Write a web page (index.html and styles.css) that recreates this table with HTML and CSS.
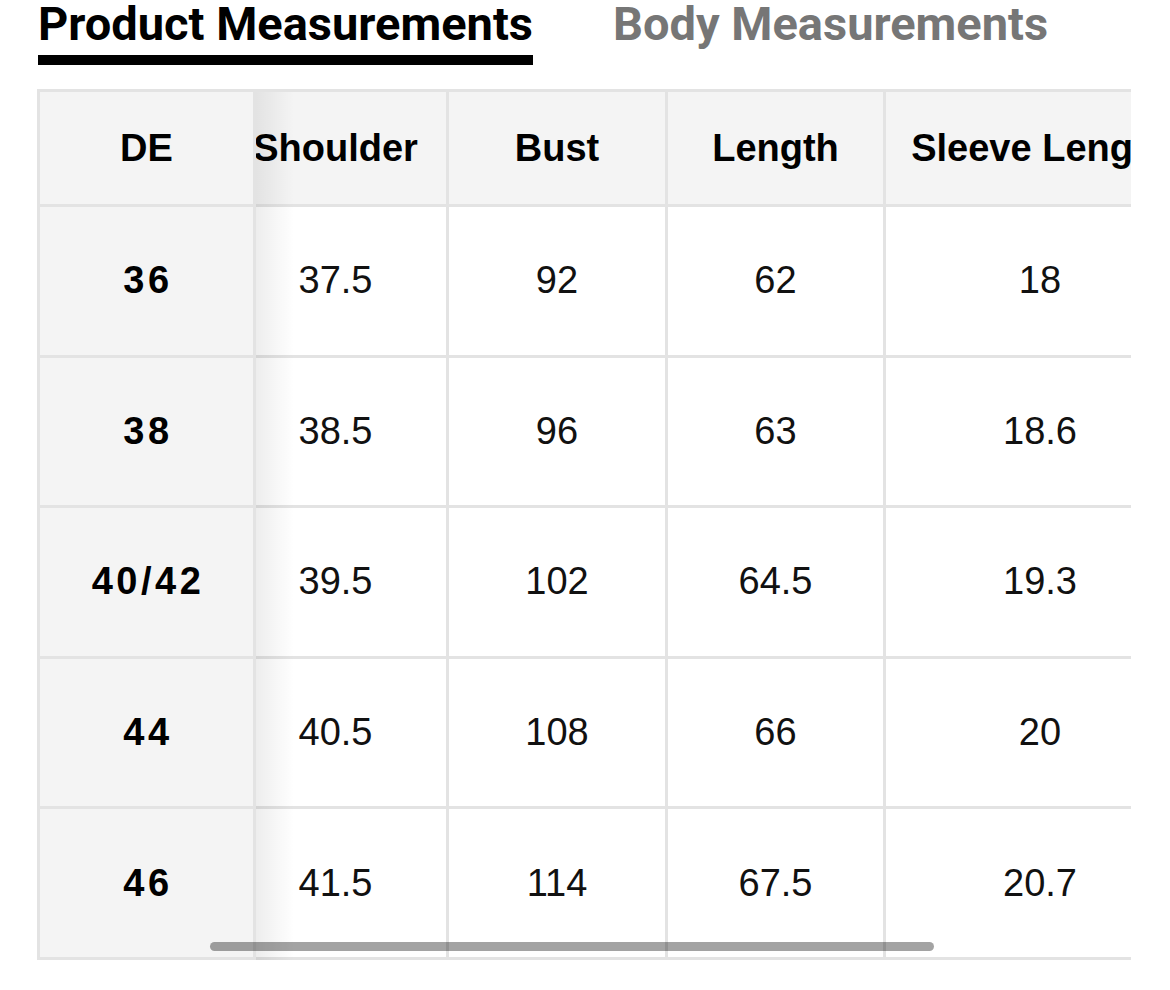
FILE: index.html
```html
<!DOCTYPE html>
<html lang="en">
<head>
<meta charset="utf-8">
<title>Size Guide</title>
<link rel="stylesheet" href="styles.css">
</head>
<body>
<div class="tabs">
  <div class="tab active">Product Measurements</div>
  <div class="tab">Body Measurements</div>
</div>
<div class="table-wrap">
  <div class="fixed-col">
    <div class="cell head">DE</div>
    <div class="cell size">36</div>
    <div class="cell size">38</div>
    <div class="cell size">40/42</div>
    <div class="cell size">44</div>
    <div class="cell size">46</div>
  </div>
  <div class="scroll-area">
    <div class="grid">
      <div class="cell head">Shoulder</div>
      <div class="cell head">Bust</div>
      <div class="cell head">Length</div>
      <div class="cell head">Sleeve Length</div>

      <div class="cell">37.5</div>
      <div class="cell">92</div>
      <div class="cell">62</div>
      <div class="cell">18</div>

      <div class="cell">38.5</div>
      <div class="cell">96</div>
      <div class="cell">63</div>
      <div class="cell">18.6</div>

      <div class="cell">39.5</div>
      <div class="cell">102</div>
      <div class="cell">64.5</div>
      <div class="cell">19.3</div>

      <div class="cell">40.5</div>
      <div class="cell">108</div>
      <div class="cell">66</div>
      <div class="cell">20</div>

      <div class="cell">41.5</div>
      <div class="cell">114</div>
      <div class="cell">67.5</div>
      <div class="cell">20.7</div>
    </div>
  </div>
  <div class="scrollbar"></div>
</div>
</body>
</html>
```

FILE: styles.css
```css
* { box-sizing: border-box; }

body {
  margin: 0;
  background: #ffffff;
  font-family: "Liberation Sans", Arial, sans-serif;
  color: #000;
}

.tabs {
  display: flex;
  gap: 80px;
  padding-left: 38px;
  padding-top: 1px;
  margin-bottom: 24px;
}

.tab {
  font-family: Roboto, "Liberation Sans", sans-serif;
  font-weight: 700;
  font-size: 47px;
  line-height: 46px;
  color: #767676;
  padding-bottom: 8px;
  border-bottom: 10px solid transparent;
  white-space: nowrap;
}

.tab.active {
  color: #000;
  border-bottom-color: #000;
}

.table-wrap {
  position: relative;
  display: flex;
  margin-left: 37px;
  width: 1094px;
  border-top: 3px solid #e3e3e3;
  border-left: 3px solid #e3e3e3;
}

.cell {
  display: flex;
  align-items: center;
  justify-content: center;
  height: 150.6px;
  border-right: 3px solid #e3e3e3;
  border-bottom: 3px solid #e3e3e3;
  font-size: 38px;
  color: #111;
  white-space: nowrap;
  background: #fff;
}

.cell.head {
  height: 115px;
  font-weight: 700;
  color: #000;
  background: #f4f4f4;
}

.fixed-col {
  position: relative;
  z-index: 2;
  flex: 0 0 216px;
}

.fixed-col .cell {
  background: #f4f4f4;
}

.cell.size {
  font-weight: 700;
  color: #000;
  letter-spacing: 3.5px;
  padding-left: 3px;
}

.fixed-col::after {
  content: "";
  position: absolute;
  top: 0;
  bottom: 0;
  left: 100%;
  width: 38px;
  background: linear-gradient(to right, rgba(0, 0, 0, 0.07), rgba(0, 0, 0, 0));
  pointer-events: none;
}

.scroll-area {
  flex: 1 1 auto;
  overflow: hidden;
}

.grid {
  display: grid;
  grid-template-columns: 224px 219px 218px 311px;
  margin-left: -31px;
  width: 972px;
}

.scrollbar {
  position: absolute;
  left: 170px;
  top: 850px;
  width: 724px;
  height: 9px;
  border-radius: 5px;
  background: rgba(0, 0, 0, 0.36);
  z-index: 3;
}
```
